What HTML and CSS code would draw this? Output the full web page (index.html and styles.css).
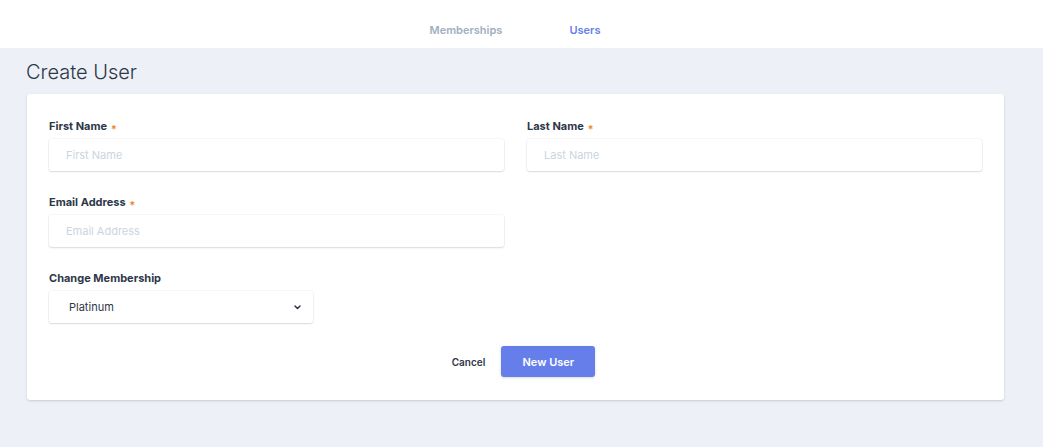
FILE: index.html
```html
<!DOCTYPE html>
<html>
<head>
<meta charset="utf-8">
<link rel="stylesheet" href="styles.css">
</head>
<body>
<nav class="topnav">
  <a class="navlink">Memberships</a>
  <a class="navlink active">Users</a>
</nav>
<main class="page">
  <h1 class="title">Create User</h1>
  <section class="card">
    <div class="row two">
      <div class="field">
        <label class="label">First Name <span class="req">*</span></label>
        <input class="input" placeholder="First Name">
      </div>
      <div class="field">
        <label class="label">Last Name <span class="req">*</span></label>
        <input class="input" placeholder="Last Name">
      </div>
    </div>
    <div class="row two">
      <div class="field">
        <label class="label">Email Address <span class="req">*</span></label>
        <input class="input" placeholder="Email Address">
      </div>
    </div>
    <div class="row">
      <div class="field">
        <label class="label">Change Membership</label>
        <div class="select">
          <span>Platinum</span>
          <svg width="7" height="5" viewBox="0 0 7 5"><path d="M1 1l2.5 2.5L6 1" fill="none" stroke="#2d3748" stroke-width="1.5" stroke-linecap="round" stroke-linejoin="round"/></svg>
        </div>
      </div>
    </div>
    <div class="actions">
      <button class="btn-cancel">Cancel</button>
      <button class="btn-primary">New User</button>
    </div>
  </section>
</main>
</body>
</html>
```
FILE: styles.css
```css
* { box-sizing: border-box; }
html, body { margin: 0; padding: 0; }
body {
  background: #edf1f7;
  font-family: Inter, "Noto Sans", sans-serif;
  color: #2d3748;
  height: 447px;
  overflow: hidden;
}
.topnav {
  height: 48px;
  background: #fff;
  display: flex;
  justify-content: center;
  align-items: flex-end;
  padding-bottom: 11px;
  padding-right: 13px;
  gap: 67px;
}
.navlink {
  font-size: 11px;
  font-weight: 600;
  color: #a0aec0;
  line-height: 14px;
}
.navlink.active { color: #667eea; }
.page {
  padding: 0 39px 0 27px;
}
.title {
  margin: 12px 0 10px -1px;
  font-size: 20px;
  line-height: 24px;
  font-weight: 300;
  color: #2d3748;
}
.card {
  background: #fff;
  border-radius: 3px;
  box-shadow: 0 1px 3px rgba(0,0,0,0.1), 0 1px 2px rgba(0,0,0,0.06);
  padding: 25px 23px 23px 22px;
}
.row {
  display: grid;
  grid-template-columns: 455px;
  gap: 23px;
  margin-bottom: 24px;
}
.row.two { grid-template-columns: 455px 455px; }
.field { display: flex; flex-direction: column; }
.label {
  font-size: 11px;
  font-weight: 700;
  line-height: 14px;
  height: 14px;
  color: #2d3748;
  margin-bottom: 6px;
  display: block;
}
.req {
  color: #ed8936;
  font-size: 11px;
  line-height: 0;
  vertical-align: -3px;
  margin-left: 1px;
}
.input {
  height: 32px;
  border: none;
  border-radius: 3px;
  box-shadow: 0 1px 2px rgba(0,0,0,0.12), 0 0 0 1px rgba(0,0,0,0.03);
  padding: 0 17px;
  font-family: Inter, sans-serif;
  font-size: 11px;
  color: #2d3748;
  outline: none;
}
.input::placeholder { color: #cbd5e0; }
.select {
  width: 264px;
  height: 32px;
  border-radius: 3px;
  box-shadow: 0 1px 2px rgba(0,0,0,0.12), 0 0 0 1px rgba(0,0,0,0.03);
  padding: 0 12px 0 20px;
  display: flex;
  align-items: center;
  justify-content: space-between;
  font-size: 11px;
  color: #2d3748;
}
.actions {
  display: flex;
  justify-content: center;
  align-items: center;
  margin-top: -1px;
  padding-left: 1px;
}
.btn-cancel {
  background: none;
  border: none;
  font-family: Inter, sans-serif;
  font-size: 10px;
  font-weight: 600;
  color: #2d3748;
  padding: 0 16px;
  height: 31px;
}
.btn-primary {
  background: #667eea;
  border: none;
  border-radius: 3px;
  color: #fff;
  font-family: Inter, sans-serif;
  font-size: 11px;
  font-weight: 600;
  width: 94px;
  height: 31px;
  box-shadow: 0 1px 3px rgba(0,0,0,0.15);
}
```
